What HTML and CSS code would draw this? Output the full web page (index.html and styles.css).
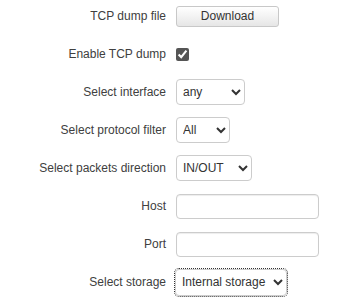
FILE: index.html
```html
<!DOCTYPE html>
<html lang="en">
<head>
    <meta charset="UTF-8">
    <meta name="viewport" content="width=device-width, initial-scale=1.0">
    <title>TCP dump</title>
    <link rel="stylesheet" href="styles.css">
</head>
<body>
    <form class="settings">
        <div class="row">
            <label>TCP dump file</label>
            <div class="field"><button type="button" class="btn">Download</button></div>
        </div>
        <div class="row">
            <label for="enable">Enable TCP dump</label>
            <div class="field"><input type="checkbox" id="enable" checked></div>
        </div>
        <div class="row">
            <label for="iface">Select interface</label>
            <div class="field">
                <select id="iface" class="sel sel-iface">
                    <option>any</option>
                </select>
            </div>
        </div>
        <div class="row">
            <label for="proto">Select protocol filter</label>
            <div class="field">
                <select id="proto" class="sel sel-proto">
                    <option>All</option>
                </select>
            </div>
        </div>
        <div class="row">
            <label for="dir">Select packets direction</label>
            <div class="field">
                <select id="dir" class="sel sel-dir">
                    <option>IN/OUT</option>
                </select>
            </div>
        </div>
        <div class="row">
            <label for="host">Host</label>
            <div class="field"><input type="text" id="host" class="txt"></div>
        </div>
        <div class="row">
            <label for="port">Port</label>
            <div class="field"><input type="text" id="port" class="txt"></div>
        </div>
        <div class="row">
            <label for="storage">Select storage</label>
            <div class="field">
                <select id="storage" class="sel sel-storage focused">
                    <option>Internal storage</option>
                </select>
            </div>
        </div>
    </form>
</body>
</html>
```

FILE: styles.css
```css
* {
    box-sizing: border-box;
}
body {
    margin: 0;
    font-family: "Liberation Sans", Arial, sans-serif;
    font-size: 12px;
    color: #404040;
    background: #fff;
}
.settings {
    display: grid;
    row-gap: 6px;
}
.row {
    display: grid;
    grid-template-columns: 166px auto;
    column-gap: 10px;
    align-items: center;
    height: 32px;
}
.row label {
    text-align: right;
}
.field {
    display: flex;
    align-items: center;
}
.btn {
    width: 103px;
    height: 21px;
    font-family: inherit;
    font-size: 12px;
    color: #333;
    background: linear-gradient(#fff, #e6e6e6);
    border: 1px solid #c8c8c8;
    border-radius: 3px;
    padding: 0;
}
input[type="checkbox"] {
    width: 13px;
    height: 13px;
    margin: 0;
    accent-color: #555;
}
.sel {
    height: 26px;
    font-family: inherit;
    font-size: 12px;
    color: #333;
    background: #fff;
    border: 1px solid #ccc;
    border-radius: 4px;
    padding: 0 2px 0 2px;
}
.sel-iface {
    width: 69px;
}
.sel-proto {
    width: 54px;
}
.sel-dir {
    width: 76px;
}
.sel-storage {
    width: 112px;
    height: 27px;
    margin-left: -1px;
}
.focused {
    outline: 1px dotted #333;
}
.txt {
    width: 143px;
    height: 25px;
    border: 1px solid #ccc;
    border-radius: 4px;
    box-shadow: inset 0 1px 1px rgba(0, 0, 0, 0.075);
    padding: 0 6px;
}
```
